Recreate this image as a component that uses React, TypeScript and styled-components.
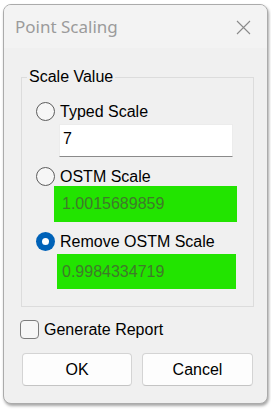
import * as React from "react";
import styled, { createGlobalStyle } from "styled-components";

const GlobalStyle = createGlobalStyle`
  html, body {
    margin: 0;
    padding: 0;
    background: #ffffff;
  }
  body {
    font-family: "Liberation Sans", Arial, sans-serif;
  }
`;

interface IOption {
  label: string;
  value: string;
  checked: boolean;
}

const options: IOption[] = [
  { label: "Typed Scale", value: "7", checked: false },
  { label: "OSTM Scale", value: "1.0015689859", checked: false },
  { label: "Remove OSTM Scale", value: "0.9984334719", checked: true }
];

export default function App() {
  return (
    <Desktop>
      <GlobalStyle />
      <Window>
        <TitleBar>
          <Title>Point Scaling</Title>
          <CloseIcon width="15" height="15" viewBox="0 0 15 15">
            <path d="M1 1 L14 14 M14 1 L1 14" stroke="#8a8a8a" strokeWidth="1.1" fill="none" />
          </CloseIcon>
        </TitleBar>
        <Body>
          <Group>
            <Legend>Scale Value</Legend>
            <RadioRow $top={0}>
              <Radio $checked={options[0].checked} />
              <Label>{options[0].label}</Label>
            </RadioRow>
            <TextBox>{options[0].value}</TextBox>

            <RadioRow $top={9}>
              <Radio $checked={options[1].checked} />
              <Label>{options[1].label}</Label>
            </RadioRow>
            <Readout $indent={18} $width={183} $height={36} $pad={8} $top={0}>
              {options[1].value}
            </Readout>

            <RadioRow $top={9}>
              <Radio $checked={options[2].checked} />
              <Label>{options[2].label}</Label>
            </RadioRow>
            <Readout $indent={21} $width={179} $height={35} $pad={5} $top={3}>
              {options[2].value}
            </Readout>
          </Group>

          <CheckRow>
            <CheckBox />
            <Label>Generate Report</Label>
          </CheckRow>

          <ButtonRow>
            <Button $width={110}>OK</Button>
            <Button $width={111}>Cancel</Button>
          </ButtonRow>
        </Body>
      </Window>
    </Desktop>
  );
}

const Desktop = styled.div`
  width: 271px;
  height: 409px;
  box-sizing: border-box;
  padding: 4px 0 0 3px;
  background: #ffffff;
  overflow: hidden;
`;

const Window = styled.div`
  width: 265px;
  height: 400px;
  box-sizing: border-box;
  border: 1px solid #ababab;
  border-radius: 8px;
  background: #f0f0f0;
  box-shadow: 1px 2px 3px rgba(0, 0, 0, 0.35);
  overflow: hidden;
  display: flex;
  flex-direction: column;
`;

const TitleBar = styled.div`
  height: 43px;
  flex: none;
  background: #f3f3f3;
  display: flex;
  align-items: center;
  justify-content: space-between;
  padding: 0 16px 0 11px;
`;

const Title = styled.span`
  font-family: "Noto Sans", "Open Sans", sans-serif;
  font-size: 17px;
  color: #9b9b9b;
  line-height: 20px;
  margin-top: 1px;
`;

const CloseIcon = styled.svg`
  display: block;
  margin-top: 1px;
`;

const Body = styled.div`
  padding: 0 13px 16px 16px;
  display: flex;
  flex-direction: column;
`;

const Group = styled.fieldset`
  width: 233px;
  box-sizing: border-box;
  margin: 20px 0 0 1px;
  padding: 15px 0 17px 14px;
  border: 1px solid #dcdcdc;
  display: flex;
  flex-direction: column;
  align-items: flex-start;
`;

const Legend = styled.legend`
  font-size: 16px;
  line-height: 18px;
  color: #000;
  padding: 0 2px;
  margin-left: -9px;
`;

const RadioRow = styled.div<{ $top: number }>`
  display: flex;
  align-items: center;
  gap: 5px;
  height: 20px;
  margin-top: ${(p) => p.$top}px;
`;

const Radio = styled.span<{ $checked: boolean }>`
  width: 19px;
  height: 19px;
  box-sizing: border-box;
  border-radius: 50%;
  flex: none;
  position: relative;
  border: ${(p) => (p.$checked ? "none" : "1px solid #5c5c5c")};
  background: ${(p) => (p.$checked ? "#0062b8" : "#f6f6f6")};

  &::after {
    content: "";
    display: ${(p) => (p.$checked ? "block" : "none")};
    position: absolute;
    left: 6px;
    top: 6px;
    width: 7px;
    height: 7px;
    border-radius: 50%;
    background: #ffffff;
  }
`;

const Label = styled.span`
  font-size: 16px;
  line-height: 19px;
  color: #000;
`;

const TextBox = styled.div`
  margin: 3px 0 0 23px;
  width: 174px;
  height: 33px;
  box-sizing: border-box;
  background: #ffffff;
  border: 1px solid #ececec;
  border-bottom-color: #8a8a8a;
  padding: 4px 0 0 3px;
  font-size: 16px;
  line-height: 20px;
  color: #000;
`;

const Readout = styled.div<{ $indent: number; $width: number; $height: number; $pad: number; $top: number }>`
  margin: ${(p) => p.$top}px 0 0 ${(p) => p.$indent}px;
  width: ${(p) => p.$width}px;
  height: ${(p) => p.$height}px;
  box-sizing: border-box;
  background: #22e400;
  padding-left: ${(p) => p.$pad}px;
  display: flex;
  align-items: center;
  font-size: 16px;
  color: #3f7a2a;
`;

const CheckRow = styled.div`
  display: flex;
  align-items: center;
  gap: 5px;
  margin-top: 13px;
  height: 19px;
`;

const CheckBox = styled.span`
  width: 19px;
  height: 19px;
  box-sizing: border-box;
  border: 1px solid #7c7c7c;
  border-radius: 4px;
  background: #f6f6f6;
  flex: none;
`;

const ButtonRow = styled.div`
  display: flex;
  gap: 10px;
  margin-top: 14px;
  padding-left: 2px;
`;

const Button = styled.button<{ $width: number }>`
  width: ${(p) => p.$width}px;
  height: 33px;
  box-sizing: border-box;
  background: #fdfdfd;
  border: 1px solid #d4d4d4;
  border-bottom-color: #c4c4c4;
  border-radius: 4px;
  font-family: "Liberation Sans", Arial, sans-serif;
  font-size: 16px;
  color: #000;
  padding: 0;
`;
